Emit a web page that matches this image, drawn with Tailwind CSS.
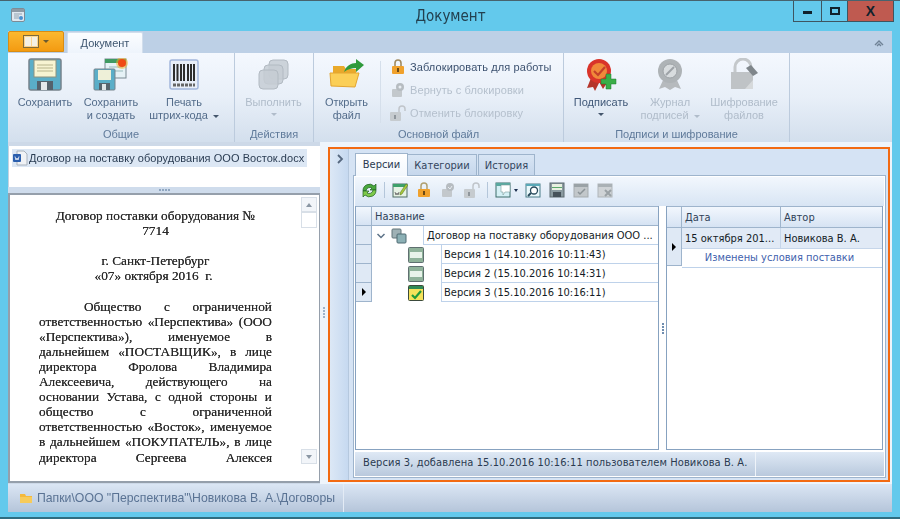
<!DOCTYPE html>
<html lang="ru"><head><meta charset="utf-8"><script src="https://cdn.jsdelivr.net/npm/@tailwindcss/browser@4"></script></head>
<body class="m-0 overflow-hidden">
<div class="w-[900px] h-[519px] flex flex-col bg-[#63c9ec] border-t border-[#47636e] font-['Liberation_Sans',sans-serif] text-[11px] text-[#1f2f45] overflow-hidden">
  <!-- title bar -->
  <div class="h-[30px] shrink-0 flex items-start pl-[10px] pt-[6px]">
    <svg width="16" height="16" viewBox="0 0 16 16" class="shrink-0"><rect x="1.5" y="1.5" width="13" height="13" rx="1.5" fill="#dfe8f0" stroke="#7d8b96"/><rect x="2" y="2" width="12" height="3" fill="#8d9aa5"/><path d="M4 7h8M4 9h5M4 11h5" stroke="#93a3b0"/><circle cx="11" cy="11" r="2" fill="#4a90d0"/></svg>
    <div class="flex-1 text-center text-[15px] leading-[18px] text-[#22404f] font-['DejaVu_Sans',sans-serif] [font-stretch:condensed] pl-[82px] blur-[0.3px]">Документ</div>
    <div class="flex h-[21px] w-[101px] mr-[6px] -mt-[6px] border border-t-0 border-[#3e5560] shrink-0">
      <div class="w-[28px] border-r border-[#3e5560] flex items-center justify-center"><div class="w-[9px] h-[3px] bg-[#10222c] mt-[3px]"></div></div>
      <div class="w-[26px] border-r border-[#3e5560] flex items-center justify-center"><div class="w-[10px] h-[8px] border-2 border-[#10222c]"></div></div>
      <div class="flex-1 bg-[#bf5a50] flex items-center justify-center text-[#10222c] text-[14px] font-bold">X</div>
    </div>
  </div>
  <div class="flex-1 flex flex-col mx-[8px] min-h-0">
    <!-- ribbon tabs -->
    <div class="h-[22px] shrink-0 flex bg-[#bdd0e6] blur-[0.3px]">
      <div class="w-[56px] h-[21px] rounded-t-[2px] bg-gradient-to-b from-[#fbb82e] to-[#f39b10] border border-[#d98c12] flex items-center justify-center gap-[4px]">
        <div class="flex gap-[1px] border border-[#7d6a3a] p-[1px] bg-white/50"><div class="w-[6px] h-[9px] bg-[#f4f0e4]"></div><div class="w-[5px] h-[9px] bg-[#f4f0e4]"></div></div>
        <div class="w-0 h-0 border-x-[3px] border-x-transparent border-t-[3px] border-t-[#6b5a30]"></div>
      </div>
      <div class="ml-[3px] mt-[1px] w-[76px] h-[21px] rounded-t-[2px] bg-gradient-to-b from-[#fbfdff] to-[#eef4fc] border border-b-0 border-[#d2deec] text-center leading-[21px] text-[#3e5670]">Документ</div>
      <div class="flex-1"></div>
      <svg width="10" height="8" viewBox="0 0 10 8" class="mt-[8px] mr-[8px]"><path d="M1 6 5 2l4 4M3 7l2-2 2 2" fill="none" stroke="#6f8296" stroke-width="1.4"/></svg>
    </div>
    <!-- ribbon -->
    <div class="h-[89px] shrink-0 flex bg-gradient-to-b from-[#f4f8fe] via-[#e8eff8] to-[#d3dfed] text-center leading-[13px] text-[#536c8a] blur-[0.3px]">
      <div class="w-[227px] border-r border-[#bccbdd] flex flex-col">
        <div class="flex flex-1">
          <div class="w-[74px] flex flex-col items-center pt-[5px]">
            <svg width="34" height="33" viewBox="0 0 34 33"><rect x="1" y="1" width="32" height="31" rx="2" fill="#5aaec8" stroke="#77838c" stroke-width="1.5"/><rect x="6" y="2" width="22" height="17" fill="#f7f4d2" stroke="#8d927f"/><path d="M9 7h16M9 10h16M9 13h16" stroke="#b8b58c"/><rect x="9" y="23" width="16" height="9" fill="#54626c"/><rect x="13" y="24" width="6" height="8" fill="#e2e7ea"/></svg>
            <div class="mt-[5px]">Сохранить</div>
          </div>
          <div class="w-[58px] flex flex-col items-center pt-[5px]">
            <svg width="36" height="33" viewBox="0 0 36 33"><rect x="12" y="1" width="21" height="19" fill="#e6f2f6" stroke="#7b8a92"/><rect x="12" y="1" width="21" height="4" fill="#3f9a62"/><path d="M16 9h14M16 13h14" stroke="#9bb"/><circle cx="29" cy="5" r="6" fill="#f7b020" opacity=".5"/><circle cx="29" cy="5" r="4" fill="#f04a14"/><rect x="1" y="11" width="21" height="21" rx="1" fill="#5aaec8" stroke="#77838c"/><rect x="5" y="12" width="13" height="10" fill="#eef0d8"/><rect x="6" y="25" width="11" height="7" fill="#55636d"/><rect x="9" y="26" width="4" height="6" fill="#dfe5e8"/></svg>
            <div class="mt-[5px]">Сохранить<br>и создать</div>
          </div>
          <div class="w-[88px] flex flex-col items-center pt-[5px]">
            <svg width="30" height="33" viewBox="0 0 30 33"><rect x="1" y="2" width="28" height="29" rx="2" fill="#e8eef8" stroke="#a3b7dc" stroke-width="1.5"/><path d="M5 6v17M8.500 6v17M12 6v17M15 6v17M19 6v17M22 6v17M25 6v17" stroke="#2d2d2d" stroke-width="2"/><path d="M4 27h22" stroke="#666" stroke-width="3" stroke-dasharray="3 1"/></svg>
            <div class="mt-[5px]">Печать<br>штрих-кода<span class="inline-block ml-[5px] align-middle w-0 h-0 border-x-[3px] border-x-transparent border-t-[3px] border-t-[#44566c]"></span></div>
          </div>
        </div>
        <div class="h-[18px] leading-[20px] text-[#5f7a9a]">Общие</div>
      </div>
      <div class="w-[79px] border-r border-[#bccbdd] flex flex-col">
        <div class="flex-1 flex flex-col items-center pt-[5px] text-[#b0bcca] pr-[1px]">
          <svg width="32" height="33" viewBox="0 0 32 33" fill="#c6cdd4" fill-opacity=".85" stroke="#b2bac2"><rect x="11" y="2" width="19" height="19" rx="4"/><rect x="6" y="7" width="19" height="19" rx="4"/><rect x="1" y="12" width="19" height="19" rx="4"/></svg>
          <div class="mt-[5px]">Выполнить</div>
          <div class="mt-[4px] w-0 h-0 border-x-[3px] border-x-transparent border-t-[3px] border-t-[#b0bcca]"></div>
        </div>
        <div class="h-[18px] leading-[20px] text-[#5f7a9a]">Действия</div>
      </div>
      <div class="w-[250px] border-r border-[#bccbdd] flex flex-col">
        <div class="flex flex-1">
          <div class="w-[65px] flex flex-col items-center pt-[5px]">
            <svg width="36" height="33" viewBox="0 0 36 33"><path d="M4 8h11l2 3h10v6H4z" fill="#e9a92a"/><path d="M2 28 1 15h29l-4 14z" fill="#fbcf57" stroke="#e3a530"/><path d="M15 14c2-6 7-9 12-9V1l8 6-8 7v-4c-4 0-8 1-12 4z" fill="#2f9a3c"/></svg>
            <div class="mt-[5px]">Открыть<br>файл</div>
          </div>
          <div class="w-px h-[62px] mt-[8px] ml-[1px] bg-[#d5dfeb]"></div>
          <div class="flex flex-col gap-[3px] pt-[4px] pl-[9px] text-left leading-[20px] tracking-[0.1px]">
            <div class="flex h-[20px] items-center gap-[4px] text-[#3d5270]"><svg width="16" height="16" viewBox="0 0 16 16"><path d="M5 7V4a3 3 0 0 1 6 0v3" fill="none" stroke="#a08a60" stroke-width="1.600"/><rect x="2" y="7" width="12" height="8" rx="1" fill="#f0a12c"/><rect x="7" y="9" width="2" height="4" fill="#6b4a15"/></svg><span>Заблокировать для работы</span></div>
            <div class="flex h-[20px] items-center gap-[4px] text-[#b5c0cd]"><svg width="16" height="16" viewBox="0 0 16 16"><rect x="2" y="7" width="10" height="8" rx="1" fill="#c3c8cc"/><circle cx="10" cy="5" r="4" fill="#b6bcc1"/><circle cx="10" cy="5" r="1.500" fill="#e8edf2"/></svg><span>Вернуть с блокировки</span></div>
            <div class="flex h-[20px] items-center gap-[4px] text-[#b5c0cd]"><svg width="16" height="16" viewBox="0 0 16 16"><path d="M9 7V4a3 3 0 0 1 6 0v2" fill="none" stroke="#c0c5ca" stroke-width="1.500"/><rect x="0" y="7" width="11" height="9" rx="1" fill="#c6cbcf"/><rect x="4" y="10" width="2" height="4" fill="#8f969c"/></svg><span>Отменить блокировку</span></div>
          </div>
        </div>
        <div class="h-[18px] leading-[20px] text-[#5f7a9a]">Основной файл</div>
      </div>
      <div class="w-[226px] border-r border-[#bccbdd] flex flex-col">
        <div class="flex flex-1">
          <div class="w-[74px] flex flex-col items-center pt-[5px]">
            <svg width="32" height="33" viewBox="0 0 32 33"><path d="M6 20 2 30l6-1 2 4 5-10zM19 20l3 5-4 6-5-9z" fill="#b5352a"/><circle cx="14" cy="13" r="12" fill="#d9342a"/><circle cx="14" cy="13" r="8" fill="#f0893a"/><path d="M9 13l4 4 7-8" fill="none" stroke="#c4402a" stroke-width="2.200"/><path d="M21 16h5v5h5v5h-5v5h-5v-5h-5v-5h5z" fill="#3aae48" stroke="#1f7a2c" stroke-width=".5"/></svg>
            <div class="mt-[5px] text-[#405878]">Подписать</div>
            <div class="mt-[4px] w-0 h-0 border-x-[3px] border-x-transparent border-t-[3px] border-t-[#44566c]"></div>
          </div>
          <div class="w-[64px] flex flex-col items-center pt-[5px] text-[#b0bcca]">
            <svg width="28" height="33" viewBox="0 0 28 33"><path d="M8 20 3 31l6-2 5 3 5-3 6 2-5-11z" fill="#b6babd"/><circle cx="14" cy="13" r="12" fill="#aeb3b6"/><circle cx="14" cy="13" r="7" fill="#d8dcde" stroke="#9da2a6"/><path d="M10 17l8-8" stroke="#9da2a6" stroke-width="2"/></svg>
            <div class="mt-[5px]">Журнал<br>подписей<span class="inline-block ml-[5px] align-middle w-0 h-0 border-x-[3px] border-x-transparent border-t-[3px] border-t-[#b0bcca]"></span></div>
          </div>
          <div class="w-[84px] flex flex-col items-center pt-[5px] text-[#b0bcca]">
            <svg width="30" height="33" viewBox="0 0 30 33"><path d="M6 14V9a8 8 0 0 1 16 0v5" fill="none" stroke="#c4c8cb" stroke-width="3"/><rect x="2" y="14" width="22" height="17" fill="#bfc3c6"/><path d="M17 10l5-3 7 8-5 3z" fill="#7f868b"/><path d="M2 31h14l8-9v9z" fill="#d6d9db"/></svg>
            <div class="mt-[5px]">Шифрование<br>файлов</div>
          </div>
        </div>
        <div class="h-[18px] leading-[20px] text-[#5f7a9a]">Подписи и шифрование</div>
      </div>
      <div class="flex-1"></div>
    </div>
    <!-- main -->
    <div class="flex-1 min-h-0 flex bg-[#eef4fb]">
      <div class="w-[312px] shrink-0 flex flex-col bg-[#cdd9e8] pt-[4px]">
        <div class="h-[41px] shrink-0 bg-white pl-[3px] pt-[3px] border-l border-[#c5d2e0]">
          <div class="h-[18px] w-[295px] bg-[#dce7f4] flex items-center gap-[1px] text-[#2a3c52] blur-[0.3px] tracking-[0.05px]">
            <svg width="16" height="16" viewBox="0 0 16 16"><path d="M5 1h7l3 3v11H5z" fill="#f0f2f5" stroke="#a9b2bc"/><rect x="1" y="4" width="8" height="8" rx="1" fill="#2b5fae"/><path d="M3 6.500 4 10l1-2 1 2 1-3.500" stroke="#fff" fill="none" stroke-width=".8"/></svg>
            <span>Договор на поставку оборудования ООО Восток.docx</span>
          </div>
        </div>
        <div class="h-[6px] shrink-0 bg-[#cfdcec] flex items-center justify-center gap-[1px]"><i class="w-[2px] h-[2px] bg-[#8fa6c0]"></i><i class="w-[2px] h-[2px] bg-[#8fa6c0]"></i><i class="w-[2px] h-[2px] bg-[#8fa6c0]"></i><i class="w-[2px] h-[2px] bg-[#8fa6c0]"></i></div>
        <div class="flex-1 min-h-0 flex bg-white border-2 border-r-[1px] border-[#959fab] mb-[1px]">
          <div class="w-[291px] pl-[29px] pr-[29px] pt-[13px] font-['Liberation_Serif',serif] text-[13.300px] leading-[15.100px] text-[#2a2a2a] blur-[0.3px] [text-shadow:0_0_0.5px_#333] whitespace-nowrap">
            <div class="text-center">Договор поставки оборудования №</div>
            <div class="text-center">7714</div>
            <div class="h-[15.100px]"></div>
            <div class="text-center">г. Санкт-Петербург</div>
            <div class="text-center pr-[4px]">«07» октября 2016&nbsp; г.</div>
            <div class="h-[15.100px]"></div>
            <div class="flex justify-between pl-[45px]"><span>Общество</span><span>с</span><span>ограниченной</span></div>
            <div class="flex justify-between"><span>ответственностью</span><span>«Перспектива»</span><span>(ООО</span></div>
            <div class="flex justify-between"><span>«Перспектива»),</span><span>именуемое</span><span>в</span></div>
            <div class="flex justify-between"><span>дальнейшем</span><span>«ПОСТАВЩИК»,</span><span>в</span><span>лице</span></div>
            <div class="flex justify-between"><span>директора</span><span>Фролова</span><span>Владимира</span></div>
            <div class="flex justify-between"><span>Алексеевича,</span><span>действующего</span><span>на</span></div>
            <div class="flex justify-between"><span>основании</span><span>Устава,</span><span>с</span><span>одной</span><span>стороны</span><span>и</span></div>
            <div class="flex justify-between"><span>общество</span><span>с</span><span>ограниченной</span></div>
            <div class="flex justify-between"><span>ответственностью</span><span>«Восток»,</span><span>именуемое</span></div>
            <div class="flex justify-between"><span>в</span><span>дальнейшем</span><span>«ПОКУПАТЕЛЬ»,</span><span>в</span><span>лице</span></div>
            <div class="flex justify-between"><span>директора</span><span>Сергеева</span><span>Алексея</span></div>
          </div>
          <div class="w-[16px] h-[267px] mt-[2px] flex flex-col">
            <div class="h-[15px] bg-[#f2f5f9] border border-[#d8dfe7] flex items-center justify-center"><div class="w-0 h-0 border-x-[3px] border-x-transparent border-b-[4px] border-b-[#8a96a3]"></div></div>
            <div class="h-[16px] bg-white border border-[#d8dfe7]"></div>
            <div class="flex-1"></div>
            <div class="h-[15px] bg-[#f2f5f9] border border-[#d8dfe7] flex items-center justify-center"><div class="w-0 h-0 border-x-[3px] border-x-transparent border-t-[4px] border-t-[#8a96a3]"></div></div>
          </div>
        </div>
      </div>
      <div class="w-[8px] shrink-0 flex flex-col items-center justify-center gap-[1px] pb-[2px]"><i class="w-[2px] h-[2px] bg-[#9db2ca]"></i><i class="w-[2px] h-[2px] bg-[#9db2ca]"></i><i class="w-[2px] h-[2px] bg-[#9db2ca]"></i><i class="w-[2px] h-[2px] bg-[#9db2ca]"></i></div>
      <!-- orange panel -->
      <div class="w-[562px] h-[335px] mt-[5px] shrink-0 border-2 border-[#f26a12] flex bg-[#d5e3f4]">
        <div class="w-[19px] shrink-0 bg-gradient-to-r from-[#dce8f6] to-[#c6d9f0] border-r border-[#b5c8de] flex justify-center pt-[5px] pl-[2px]"><svg width="8" height="10" viewBox="0 0 8 10"><path d="M2 1l4 4-4 4" fill="none" stroke="#56687f" stroke-width="1.800"/></svg></div>
        <div class="flex-1 pl-[4px] pr-[2px] pt-[3px] pb-[2px] min-w-0 flex flex-col font-['DejaVu_Sans',sans-serif] [font-stretch:condensed] text-[#1c2733]">
          <div class="h-[23px] flex items-end pl-[2px] shrink-0">
            <div class="w-[53px] h-[23px] bg-gradient-to-b from-white to-[#f2f7fd] border border-b-0 border-[#9eb4cc] text-center leading-[22px] text-[#2a3a50] relative top-px">Версии</div>
            <div class="w-[69px] h-[21px] bg-gradient-to-b from-[#d8e5f4] to-[#c6d7ec] border border-l-0 border-b-0 border-[#9eb4cc] text-center leading-[21px] text-[#34465e]">Категории</div>
            <div class="w-[57px] h-[21px] ml-[1px] bg-gradient-to-b from-[#d8e5f4] to-[#c6d7ec] border border-b-0 border-[#9eb4cc] text-center leading-[21px] text-[#34465e]">История</div>
          </div>
          <div class="flex-1 min-h-0 border border-[#9eb4cc] bg-white p-[1px] flex flex-col">
            <!-- toolbar -->
            <div class="h-[29px] shrink-0 bg-gradient-to-b from-[#f2f7fd] to-[#d8e5f4] flex items-center pl-[6px] pb-[3px] gap-[8px]">
              <svg width="17" height="17" viewBox="0 0 17 17" class="-mr-[2px]"><path d="M2 9a6.500 6.500 0 0 1 11-5l2-2v6H9l2-2a4 4 0 0 0-6 3z" fill="#49a83c" stroke="#1f5f22" stroke-width=".7"/><path d="M15 8a6.500 6.500 0 0 1-11 5l-2 2V9h6l-2 2a4 4 0 0 0 6-3z" fill="#7ec94a" stroke="#1f5f22" stroke-width=".7"/></svg>
              <div class="w-px h-[16px] bg-[#b4c6da] -mr-[1px]"></div>
              <svg width="16" height="16" viewBox="0 0 16 16"><rect x="1" y="2" width="14" height="13" fill="#e6f2e4" stroke="#4f6d66"/><rect x="1" y="2" width="14" height="3" fill="#3ea06a"/><path d="M3 10l1 3 1-2 1 2 1-3" fill="none" stroke="#777"/><path d="M8 11 14 2l2 1-6 9-2 1z" fill="#a9c93a" stroke="#4a6a20" stroke-width=".5"/></svg>
              <svg width="16" height="16" viewBox="0 0 16 16"><path d="M5 7V4a3 3 0 0 1 6 0v3" fill="none" stroke="#b0a070" stroke-width="1.500"/><rect x="2" y="7" width="12" height="8" rx="1" fill="#f0a12c"/><rect x="7" y="9" width="2" height="4" fill="#6b4a15"/></svg>
              <svg width="16" height="16" viewBox="0 0 16 16"><rect x="2" y="7" width="10" height="8" rx="1" fill="#c3c8cc"/><circle cx="10" cy="5" r="4" fill="#b6bcc1"/><path d="M8 5l2 2 2-3" fill="none" stroke="#e8edf2"/></svg>
              <svg width="16" height="16" viewBox="0 0 16 16"><path d="M9 7V4a3 3 0 0 1 6 0v2" fill="none" stroke="#c0c5ca" stroke-width="1.500"/><rect x="0" y="7" width="11" height="9" rx="1" fill="#c6cbcf"/><rect x="4" y="10" width="2" height="4" fill="#8f969c"/></svg>
              <div class="w-px h-[16px] bg-[#b4c6da] -ml-[1px]"></div>
              <div class="flex items-center gap-[2px] -mr-[1px] -ml-[1px]"><svg width="17" height="16" viewBox="0 0 17 16"><rect x="1" y="1" width="14" height="14" fill="#d5f0f5" stroke="#3d6d6a"/><rect x="1" y="1" width="14" height="3" fill="#5aa9a0"/><path d="M6 3h9v7h-5l-2 3v-3H6z" fill="#fff" stroke="#7a9a9a" stroke-width=".6"/></svg><div class="w-0 h-0 border-x-[2px] border-x-transparent border-t-[3px] border-t-[#1c2f50]"></div></div>
              <svg width="16" height="16" viewBox="0 0 16 16"><rect x="1" y="2" width="14" height="13" fill="#eaf8fb" stroke="#4b7d88"/><rect x="1" y="2" width="14" height="2" fill="#5aa9b8"/><circle cx="9" cy="8.500" r="3.500" fill="#fff" stroke="#26485a" stroke-width="1.300"/><path d="M6 11 3 14" stroke="#26485a" stroke-width="2"/></svg>
              <svg width="16" height="16" viewBox="0 0 16 16"><rect x="1" y="1" width="14" height="14" fill="#8a9aa0" stroke="#5d6a70"/><rect x="3" y="2" width="10" height="6" fill="#e7f0e0"/><rect x="3" y="5" width="10" height="1" fill="#5aa86a"/><rect x="4" y="10" width="8" height="5" fill="#46525a"/></svg>
              <svg width="16" height="16" viewBox="0 0 16 16"><rect x="1" y="2" width="14" height="13" fill="#c2c7ca" stroke="#a5abaf"/><rect x="1" y="2" width="14" height="3" fill="#9aa2a6"/><path d="M5 10l2 2 5-5" fill="none" stroke="#8b9397" stroke-width="1.500"/></svg>
              <svg width="16" height="16" viewBox="0 0 16 16"><rect x="1" y="2" width="14" height="13" fill="#cfd3d6" stroke="#afb5b9"/><rect x="1" y="2" width="14" height="3" fill="#aab1b5"/><path d="M8 8l6 6M14 8l-6 6" stroke="#9aa1a5" stroke-width="2"/></svg>
            </div>
            <!-- grids -->
            <div class="flex-1 min-h-0 flex">
              <div class="w-[304px] h-[244px] border border-t-0 border-[#87a2c0] flex flex-col">
                <div class="h-[20px] shrink-0 flex border-y border-[#9eb4cc] bg-gradient-to-b from-[#f2f7fd] to-[#d6e3f3] text-[#2f4258]">
                  <div class="w-[16px] border-r border-[#9eb4cc]"></div>
                  <div class="pl-[3px] leading-[20px] flex-1">Название</div>
                </div>
                <div class="h-[19px] shrink-0 flex">
                  <div class="w-[16px] shrink-0 bg-[#dfe9f5] border-r border-b border-[#9eb4cc]"></div>
                  <div class="w-[51px] flex items-center pl-[4px] gap-[5px]"><svg width="10" height="8" viewBox="0 0 10 8"><path d="M1.500 2 5 5.500 8.500 2" fill="none" stroke="#5d7388" stroke-width="1.500"/></svg><svg width="16" height="16" viewBox="0 0 16 16"><rect x="1" y="1" width="9" height="9" rx="1" fill="#9fb1b5" stroke="#62757b"/><rect x="6" y="6" width="9" height="9" rx="1" fill="#8cb0b5" stroke="#4f6a72"/></svg></div>
                  <div class="flex-1 border-l border-b border-[#bed2ea] pl-[3px] leading-[20px] whitespace-nowrap text-[#141c26]">Договор на поставку оборудования ООО ...</div>
                </div>
                <div class="h-[19px] shrink-0 flex">
                  <div class="w-[16px] shrink-0 bg-[#dfe9f5] border-r border-b border-[#9eb4cc]"></div>
                  <div class="w-[69px] flex items-center justify-end pr-[17px]"><svg width="16" height="16" viewBox="0 0 16 16"><rect x="0.500" y="0.500" width="15" height="15" rx="1" fill="#8fb29a" stroke="#5f6f70"/><rect x="2" y="5" width="12" height="6" fill="#e8f3ea"/></svg></div>
                  <div class="flex-1 border-l border-b border-[#bed2ea] pl-[2px] leading-[20px] text-[#141c26]">Версия 1 (14.10.2016 10:11:43)</div>
                </div>
                <div class="h-[19px] shrink-0 flex">
                  <div class="w-[16px] shrink-0 bg-[#dfe9f5] border-r border-b border-[#9eb4cc]"></div>
                  <div class="w-[69px] flex items-center justify-end pr-[17px]"><svg width="16" height="16" viewBox="0 0 16 16"><rect x="0.500" y="0.500" width="15" height="15" rx="1" fill="#8fb29a" stroke="#5f6f70"/><rect x="2" y="5" width="12" height="6" fill="#e8f3ea"/></svg></div>
                  <div class="flex-1 border-l border-b border-[#bed2ea] pl-[2px] leading-[20px] text-[#141c26]">Версия 2 (15.10.2016 10:14:31)</div>
                </div>
                <div class="h-[19px] shrink-0 flex">
                  <div class="w-[16px] shrink-0 bg-[#dfe9f5] border-r border-b border-[#9eb4cc] flex items-center justify-center"><div class="w-0 h-0 border-y-[4px] border-y-transparent border-l-[4px] border-l-black"></div></div>
                  <div class="w-[69px] flex items-center justify-end pr-[17px]"><svg width="16" height="16" viewBox="0 0 16 16"><rect x="0.500" y="0.500" width="15" height="15" rx="1" fill="#f5e25a" stroke="#3b4a3c"/><rect x="1" y="1" width="14" height="3" fill="#2f8a55"/><path d="M4 10l3 3 6-7" fill="none" stroke="#1f9a3a" stroke-width="2.200"/></svg></div>
                  <div class="flex-1 border-l border-b border-[#bed2ea] pl-[2px] leading-[20px] text-[#141c26]">Версия 3 (15.10.2016 10:16:11)</div>
                </div>
              </div>
              <div class="w-[7px] shrink-0 flex flex-col items-center justify-center gap-[1px] h-[244px]"><i class="w-[2px] h-[2px] bg-[#6f8daf]"></i><i class="w-[2px] h-[2px] bg-[#6f8daf]"></i><i class="w-[2px] h-[2px] bg-[#6f8daf]"></i><i class="w-[2px] h-[2px] bg-[#6f8daf]"></i></div>
              <div class="w-[217px] h-[244px] border border-t-0 border-[#87a2c0] flex flex-col">
                <div class="h-[22px] shrink-0 flex border-y border-[#9eb4cc] bg-gradient-to-b from-[#f2f7fd] to-[#d6e3f3] text-[#2f4258] leading-[22px]">
                  <div class="w-[15px] border-r border-[#9eb4cc]"></div>
                  <div class="w-[99px] border-r border-[#9eb4cc] pl-[3px]">Дата</div>
                  <div class="flex-1 pl-[3px]">Автор</div>
                </div>
                <div class="flex h-[38px] shrink-0">
                  <div class="w-[15px] bg-[#dfe9f5] border-r border-b border-[#9eb4cc] flex items-center justify-center"><div class="w-0 h-0 border-y-[4px] border-y-transparent border-l-[4px] border-l-black"></div></div>
                  <div class="flex-1 flex flex-col min-w-0">
                    <div class="h-[21px] flex bg-[#e1eaf6] border-b border-[#c6d6ea] leading-[22px] text-[#141c26]">
                      <div class="w-[99px] border-r border-[#c6d6ea] pl-[3px] whitespace-nowrap">15 октября 201...</div>
                      <div class="pl-[3px] whitespace-nowrap">Новикова В. А.</div>
                    </div>
                    <div class="flex-1 border-b border-[#bed2ea] text-center text-[#3f62ad] leading-[18px] pr-[5px]">Изменены условия поставки</div>
                  </div>
                </div>
              </div>
            </div>
            <!-- status -->
            <div class="h-[24px] shrink-0 bg-gradient-to-b from-[#dfe9f5] to-[#b9c9dd] flex items-center pl-[8px] text-[#2a3a50]">
              <div class="pr-[8px] border-r border-[#eef3f9] h-full leading-[22px] whitespace-nowrap tracking-[0.1px]">Версия 3, добавлена 15.10.2016 10:16:11 пользователем Новикова В. А.</div>
            </div>
          </div>
        </div>
      </div>
    </div>
    <!-- bottom -->
    <div class="h-[28px] shrink-0 bg-gradient-to-b from-[#dbe6f4] to-[#b5c5da] flex items-center pl-[11px] gap-[4px] text-[12.250px] text-[#5a7394] blur-[0.3px]">
      <svg width="14" height="12" viewBox="0 0 14 12"><path d="M1 2h5l1 2h6v7H1z" fill="#f4b93c"/><path d="M1 5h12v6H1z" fill="#f7cb5a"/></svg>
      <div class="w-[302px] whitespace-nowrap">Папки\ООО "Перспектива"\Новикова В. А.\Договоры</div>
      <div class="w-px h-full bg-[#e3ebf5]"></div>
    </div>
  </div>
  <div class="h-[7px] shrink-0 border-b-2 border-[#2f6d80]"></div>
</div>
</body></html>
